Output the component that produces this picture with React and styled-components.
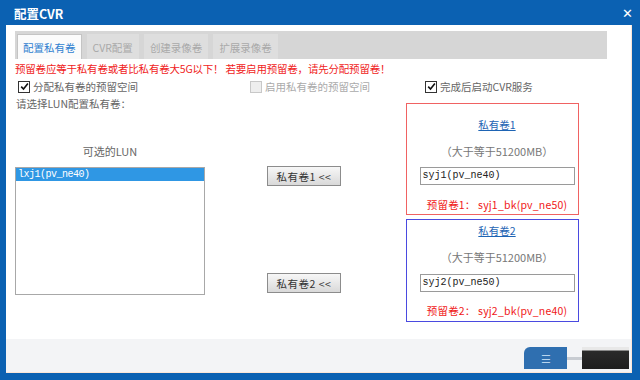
import styled, { createGlobalStyle } from 'styled-components';

const Global = createGlobalStyle`
  html, body {
    margin: 0;
    padding: 0;
    background: #0b61b2;
  }
  body {
    font-family: "Noto Sans CJK SC", "Noto Sans", sans-serif;
  }
`;

const Frame = styled.div`
  width: 640px;
  height: 380px;
  background: #0b61b2;
  display: flex;
  flex-direction: column;
  overflow: hidden;
`;

const TitleBar = styled.div`
  height: 24px;
  flex: none;
  display: flex;
  align-items: center;
  justify-content: space-between;
  padding: 1px 7px 0 14px;
  color: #fff;
  font-weight: bold;
  font-size: 12.5px;
`;

const Close = styled.span`
  font-size: 13px;
  font-family: "DejaVu Sans", sans-serif;
  line-height: 1;
`;

const Body = styled.div`
  flex: 1;
  margin: 0 8px 7px 6px;
  background: #fff;
  display: flex;
  flex-direction: column;
  border-right: 1px solid #fbe6d8;
  border-bottom: 1px solid #fbe6d8;
`;

const Main = styled.div`
  flex: 1;
  padding: 6px 0 0 9px;
  font-size: 10.5px;
  color: #666;
`;

const Tabs = styled.div`
  width: 592px;
  height: 28px;
  background: #d6d6d6;
  display: flex;
  align-items: flex-end;
  gap: 5px;
  padding-left: 2px;
  box-sizing: border-box;
`;

const Tab = styled.div`
  height: 25px;
  box-sizing: border-box;
  padding: 0 5px;
  display: flex;
  align-items: center;
  font-size: 10.5px;
  color: ${(p) => (p.$active ? '#2f7fd0' : '#a9a9a9')};
  background: ${(p) => (p.$active ? '#fbfbfb' : '#dedede')};
  border: 1px solid ${(p) => (p.$active ? '#c4c4c4' : 'transparent')};
  border-bottom: none;
`;

const Warning = styled.div`
  margin-top: 3px;
  line-height: 13px;
  color: #f01c1c;
  font-size: 10.5px;
  letter-spacing: -0.2px;
`;

const CheckRow = styled.div`
  margin-top: 5px;
  display: flex;
  height: 13px;
  line-height: 13px;
`;

const CheckItem = styled.label`
  display: flex;
  align-items: center;
  gap: 3px;
  width: ${(p) => p.$w || 'auto'};
  margin-left: ${(p) => p.$ml || '0'};
  color: ${(p) => (p.$disabled ? '#aaa' : '#666')};
`;

const Box = styled.span`
  width: 10px;
  height: 10px;
  border: 1px solid ${(p) => (p.$disabled ? '#c8c8c8' : '#333')};
  background: ${(p) => (p.$disabled ? '#eeeeee' : '#fff')};
  display: flex;
  align-items: center;
  justify-content: center;
`;

const Check = ({ checked, disabled, children, w, ml }) => (
  <CheckItem $w={w} $ml={ml} $disabled={disabled}>
    <Box $disabled={disabled}>
      {checked && (
        <svg width="9" height="9" viewBox="0 0 9 9">
          <path d="M1.2 4.6 L3.5 7 L7.9 1.4" fill="none" stroke="#111" strokeWidth="1.6" />
        </svg>
      )}
    </Box>
    {children}
  </CheckItem>
);

const Grid = styled.div`
  margin-top: 4px;
  display: grid;
  grid-template-columns: 190px 74px 178px;
  column-gap: 61px;
  align-items: start;
`;

const Column = styled.div`
  display: flex;
  flex-direction: column;
  margin-left: ${(p) => p.$ml || 0}px;
`;

const Label = styled.div`
  line-height: 13px;
  padding-left: 1px;
`;

const ListTitle = styled.div`
  margin-top: 34px;
  line-height: 14px;
  text-align: center;
  font-size: 11px;
`;

const List = styled.div`
  margin-top: 9px;
  height: 128px;
  border: 1px solid #a8a8a8;
  box-sizing: border-box;
  background: #fff;
`;

const ListItem = styled.div`
  height: 13px;
  line-height: 13px;
  padding-left: 2px;
  font-family: "Liberation Mono", monospace;
  font-size: 10px;
  letter-spacing: -0.5px;
  color: ${(p) => (p.$selected ? '#fff' : '#222')};
  background: ${(p) => (p.$selected ? '#2f97e4' : 'transparent')};
`;

const MoveButton = styled.button`
  width: 74px;
  height: 20px;
  margin-top: ${(p) => p.$mt}px;
  padding: 0;
  border: 1px solid #8c8c8c;
  background: linear-gradient(#f7f7f7, #d9d9d9);
  font-family: "Noto Sans CJK SC", sans-serif;
  font-size: 10.5px;
  color: #333;
  letter-spacing: 0.5px;
`;

const VolumeBox = styled.div`
  border: 1px solid ${(p) => p.$color};
  padding: ${(p) => p.$pt}px 0 ${(p) => p.$pb}px 9px;
  display: flex;
  flex-direction: column;
  align-items: center;
  margin-top: ${(p) => p.$mt || 0}px;
`;

const VolLink = styled.a`
  color: #1e64b4;
  text-decoration: underline;
  line-height: 14px;
  font-size: 10.5px;
`;

const SizeNote = styled.div`
  margin-top: 12px;
  line-height: 14px;
  color: #777;
  font-size: 11px;
`;

const VolInput = styled.div`
  margin-top: ${(p) => p.$mt}px;
  width: 155px;
  height: 18px;
  box-sizing: border-box;
  border: 1px solid #9a9a9a;
  padding-left: 2px;
  font-family: "Liberation Mono", monospace;
  font-size: 10px;
  line-height: 16px;
  color: #222;
`;

const Reserve = styled.div`
  margin-top: ${(p) => p.$mt}px;
  line-height: 12px;
  color: #f01818;
  font-size: 10.5px;
  letter-spacing: 0.2px;
`;

const Footer = styled.div`
  height: 33px;
  flex: none;
  background: #f3f4f6;
  display: flex;
  justify-content: flex-end;
  align-items: center;
  padding-right: 2px;
`;

const FooterBlue = styled.div`
  width: 43px;
  height: 22px;
  margin-top: 5px;
  background: #2f6fb0;
  border-radius: 6px 0 0 0;
  color: #b8d4ee;
  font-size: 11px;
  display: flex;
  align-items: center;
  justify-content: center;
`;

const Connector = styled.div`
  width: 15px;
  height: 3px;
  margin-top: 5px;
  background: #c8ccd2;
`;

const FooterDark = styled.div`
  width: 47px;
  height: 22px;
  margin-top: 5px;
  background: linear-gradient(#e8e8e8 0, #e8e8e8 3px, #2a2a2a 4px, #1e1e1e);
`;

export default function App() {
  return (
    <Frame>
      <Global />
      <TitleBar>
        <span>配置CVR</span>
        <Close>✕</Close>
      </TitleBar>
      <Body>
        <Main>
          <Tabs>
            <Tab $active>配置私有卷</Tab>
            <Tab>CVR配置</Tab>
            <Tab>创建录像卷</Tab>
            <Tab>扩展录像卷</Tab>
          </Tabs>
          <Warning>预留卷应等于私有卷或者比私有卷大5G以下！ 若要启用预留卷，请先分配预留卷！</Warning>
          <CheckRow>
            <Check checked w="232px" ml="3px">分配私有卷的预留空间</Check>
            <Check disabled w="175px">启用私有卷的预留空间</Check>
            <Check checked>完成后启动CVR服务</Check>
          </CheckRow>
          <Grid>
            <Column>
              <Label>请选择LUN配置私有卷：</Label>
              <ListTitle>可选的LUN</ListTitle>
              <List>
                <ListItem $selected>lxj1(pv_ne40)</ListItem>
              </List>
            </Column>
            <Column $ml={1}>
              <MoveButton $mt={69}>私有卷1 &lt;&lt;</MoveButton>
              <MoveButton $mt={87}>私有卷2 &lt;&lt;</MoveButton>
            </Column>
            <Column $ml={5}>
              <VolumeBox $color="#f06262" $pt={14} $pb={3} $mt={6}>
                <VolLink>私有卷1</VolLink>
                <SizeNote>（大于等于51200MB）</SizeNote>
                <VolInput $mt={9}>syj1(pv_ne40)</VolInput>
                <Reserve $mt={14}>预留卷1： syj1_bk(pv_ne50)</Reserve>
              </VolumeBox>
              <VolumeBox $color="#4a4ae0" $pt={4} $pb={4} $mt={4}>
                <VolLink>私有卷2</VolLink>
                <SizeNote>（大于等于51200MB）</SizeNote>
                <VolInput $mt={10}>syj2(pv_ne50)</VolInput>
                <Reserve $mt={13}>预留卷2： syj2_bk(pv_ne40)</Reserve>
              </VolumeBox>
            </Column>
          </Grid>
        </Main>
        <Footer>
          <FooterBlue>☰</FooterBlue>
          <Connector />
          <FooterDark />
        </Footer>
      </Body>
    </Frame>
  );
}
